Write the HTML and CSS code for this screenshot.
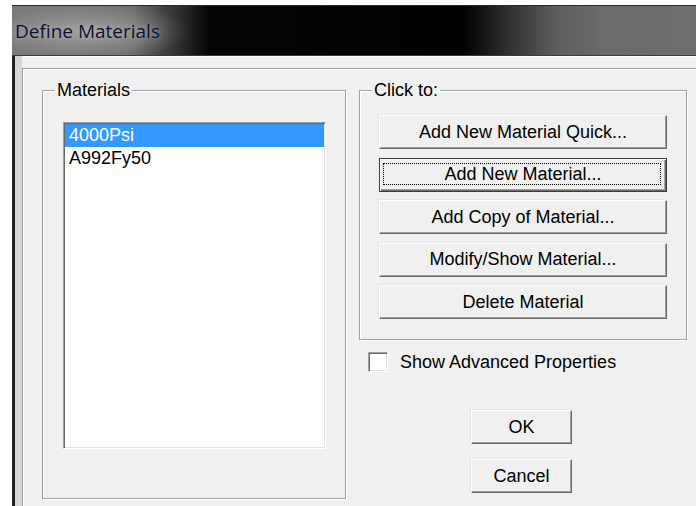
FILE: index.html
```html
<!DOCTYPE html>
<html lang="en">
<head>
<meta charset="utf-8">
<title>Define Materials</title>
<link rel="stylesheet" href="styles.css">
</head>
<body>
<div class="window">
  <div class="titlebar"><span class="title">Define Materials</span></div>
  <div class="frame">
    <div class="client">
      <fieldset class="group materials">
        <legend>Materials</legend>
        <ul class="listbox">
          <li class="item selected">4000Psi</li>
          <li class="item">A992Fy50</li>
        </ul>
      </fieldset>
      <div class="side">
        <fieldset class="group actions">
          <legend>Click to:</legend>
          <div class="buttons">
            <button class="btn wide">Add New Material Quick...</button>
            <button class="btn wide focused">Add New Material...</button>
            <button class="btn wide">Add Copy of Material...</button>
            <button class="btn wide">Modify/Show Material...</button>
            <button class="btn wide">Delete Material</button>
          </div>
        </fieldset>
        <label class="check">
          <span class="box"></span>
          <span class="check-label">Show Advanced Properties</span>
        </label>
        <button class="btn small ok">OK</button>
        <button class="btn small cancel">Cancel</button>
      </div>
    </div>
  </div>
</div>
</body>
</html>
```

FILE: styles.css
```css
html, body {
  margin: 0;
  padding: 0;
  overflow: hidden;
  background: #ffffff;
}

body {
  font-family: "Liberation Sans", Arial, sans-serif;
  font-size: 18px;
  color: #000;
}

.window {
  margin: 5px 0 0 12px;
  width: 684px;
  border-top: 1px solid #2b2b2b;
}

/* caption bar: grey at both ends, black in the middle, soft glow behind the title */
.titlebar {
  height: 49px;
  border-bottom: 1px solid #3a3a3a;
  display: flex;
  align-items: center;
  padding-left: 3px;
  background:
    radial-gradient(ellipse 100px 30px at 78px 25px, rgba(190,190,190,0.6), rgba(190,190,190,0)),
    linear-gradient(to right, #7a7a7a 0px, #6a6a6a 120px, #2a2a2a 170px, #050505 198px, #000 450px, #333 500px, #5e5e5e 545px, #6b6b6b 590px, #6e6e6e 700px);
}

.title {
  font-family: "Open Sans", "Noto Sans", sans-serif;
  font-size: 19px;
  color: #0f0f33;
  text-shadow: 0 0 6px rgba(220,220,220,0.6);
}

.frame {
  display: flex;
  border-left: 3px solid #222;
  background: #f0f0f0;
  padding: 12px 0 0 7px;
  box-shadow: inset 7px 0 0 #d6d6d6, inset 0 1px 0 #fff;
}

.client {
  flex: 1;
  height: 426px;
  display: flex;
  align-items: flex-start;
  gap: 13px;
  padding: 11px 0 0 19px;
  background: #f0f0f0;
  border-top: 1px solid #a0a0a0;
  border-left: 1px solid #a0a0a0;
  box-shadow: inset 1px 1px 0 #fff;
}

/* etched group box */
.group {
  margin: 0;
  padding: 0;
  box-sizing: border-box;
  border: 1px solid #a0a0a0;
  box-shadow: inset 1px 1px 0 #fff, 1px 1px 0 #fff;
  min-width: 0;
}

.group legend {
  margin-left: 12px;
  padding: 0 2px;
  line-height: 21px;
  font-size: 18px;
}

.materials {
  width: 304px;
  height: 419px;
}

.listbox {
  list-style: none;
  margin: 21px 0 0 20px;
  padding: 0;
  width: 263px;
  height: 327px;
  box-sizing: border-box;
  background: #fff;
  border-top: 1px solid #a0a0a0;
  border-left: 1px solid #a0a0a0;
  border-right: 1px solid #fff;
  border-bottom: 1px solid #fff;
  box-shadow: inset 1px 1px 0 #696969, inset -1px -1px 0 #e3e3e3;
  padding: 1px;
}

.item {
  height: 23px;
  line-height: 23px;
  padding-left: 4px;
}

.item.selected {
  background: #3399ff;
  color: #fff;
}

.side {
  width: 328px;
  display: flex;
  flex-direction: column;
  align-items: flex-start;
}

.actions {
  width: 328px;
  height: 260px;
}

.buttons {
  display: flex;
  flex-direction: column;
  gap: 8.5px;
  padding: 14px 19px 0 19px;
}

/* raised push button */
.btn {
  position: relative;
  box-sizing: border-box;
  margin: 0;
  padding: 0;
  font-family: "Liberation Sans", Arial, sans-serif;
  font-size: 18px;
  color: #000;
  background: #f0f0f0;
  border-top: 1px solid #fff;
  border-left: 1px solid #fff;
  border-right: 1px solid #696969;
  border-bottom: 1px solid #696969;
  box-shadow: inset -1px -1px 0 #a0a0a0, -1px -1px 0 #e3e3e3;
  height: 34px;
}

.btn.wide {
  width: 288px;
}

.btn.focused {
  border: 1px solid #3c3c3c;
  box-shadow: inset 1px 1px 0 #fff, inset -1px -1px 0 #696969, inset -2px -2px 0 #a0a0a0;
}

.btn.focused::after {
  content: "";
  position: absolute;
  top: 4px;
  left: 3px;
  right: 5px;
  bottom: 6px;
  border: 1px dotted #000;
}

.check {
  display: flex;
  align-items: center;
  margin: 12px 0 0 9px;
  height: 20px;
}

.box {
  width: 20px;
  height: 20px;
  box-sizing: border-box;
  background: #fff;
  border-top: 1px solid #a0a0a0;
  border-left: 1px solid #a0a0a0;
  border-right: 1px solid #fff;
  border-bottom: 1px solid #fff;
  box-shadow: inset 1px 1px 0 #696969, inset -1px -1px 0 #e3e3e3;
}

.check-label {
  margin-left: 12px;
  line-height: 20px;
}

.btn.small {
  width: 101px;
  margin-left: 112px;
}

.ok {
  margin-top: 38px;
}

.cancel {
  margin-top: 15px;
}
```
